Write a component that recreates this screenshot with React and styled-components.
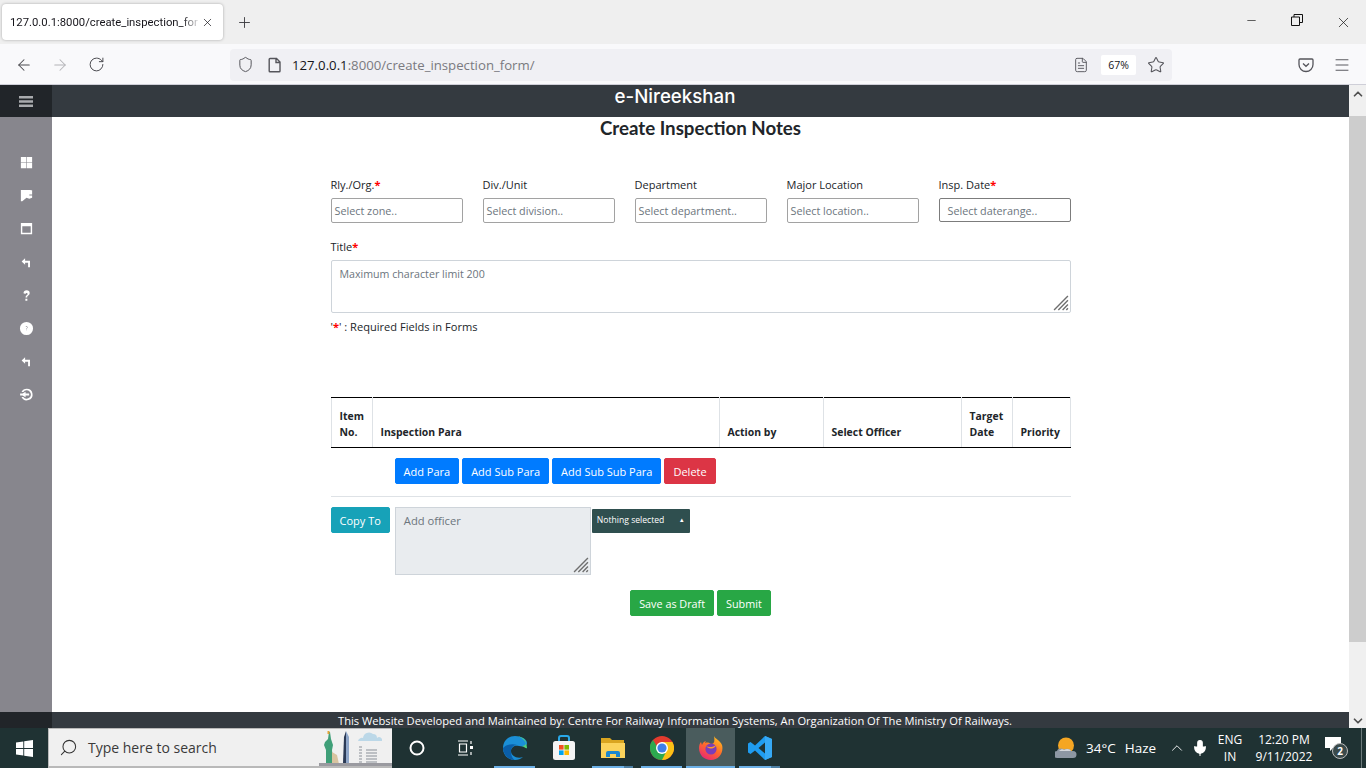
import React from "react";
import styled, { createGlobalStyle } from "styled-components";
import { ArrowLeft, ArrowRight, RotateCw, Shield, FileText, Star, Menu, X, Plus, Minus, Search, ChevronUp, ChevronDown, Mic } from "lucide-react";

const GlobalStyle = createGlobalStyle`
  html, body { margin: 0; padding: 0; height: 100%; overflow: hidden; }
  * { box-sizing: border-box; }
  body { font-family: "Open Sans", "Noto Sans", sans-serif; color: #212529; background: #fff; }
`;

const Screen = styled.div`
  width: 1366px;
  height: 768px;
  display: flex;
  flex-direction: column;
  overflow: hidden;
`;

/* browser chrome */
const TabStrip = styled.div`
  height: 44px;
  background: #efefef;
  display: flex;
  align-items: center;
  padding-left: 2px;
`;
const Tab = styled.div`
  width: 221px;
  height: 36px;
  background: #fff;
  border-radius: 4px;
  box-shadow: 0 0 3px rgba(0, 0, 0, 0.3);
  display: flex;
  align-items: center;
  padding: 0 9px 0 8px;
  font-family: "Roboto", sans-serif;
  font-size: 11.3px;
  color: #15141a;
`;
const TabTitle = styled.span`
  flex: 1;
  overflow: hidden;
  white-space: nowrap;
  -webkit-mask-image: linear-gradient(to right, #000 90%, transparent);
  mask-image: linear-gradient(to right, #000 90%, transparent);
`;
const NewTab = styled.div`
  width: 42px;
  display: flex;
  justify-content: center;
  color: #3b3b3f;
`;
const WindowButtons = styled.div`
  margin-left: auto;
  display: flex;
`;
const WindowButton = styled.div`
  width: 46px;
  display: flex;
  justify-content: center;
  color: #111;
`;
const Toolbar = styled.div`
  height: 41px;
  background: #f9f9fb;
  border-bottom: 1px solid #cfcfd8;
  display: flex;
  align-items: center;
  padding: 1px 0 0 6px;
`;
const NavButton = styled.div`
  width: 36px;
  display: flex;
  justify-content: center;
  color: ${(p) => (p.$off ? "#b4b4b8" : "#4a4a4f")};
`;
const UrlBar = styled.div`
  width: 942px;
  height: 32px;
  margin-left: 116px;
  background: #f0f0f4;
  border-radius: 4px;
  display: flex;
  align-items: center;
  padding-left: 7px;
  color: #55555b;
`;
const PageIcon = styled.svg`
  width: 16px;
  height: 16px;
  margin-left: 13px;
  fill: none;
  stroke: currentColor;
  stroke-width: 1.4;
`;
const UrlText = styled.div`
  margin-left: 9px;
  font-size: 13.2px;
  color: #7a7a80;
  flex: 1;
  b { font-weight: 400; color: #15141a; }
`;
const ZoomBadge = styled.div`
  width: 35px;
  height: 20px;
  margin: 0 11px 0 12px;
  background: #fff;
  border-radius: 2px;
  font-size: 10.5px;
  color: #15141a;
  display: flex;
  align-items: center;
  justify-content: center;
`;
const UrlEnd = styled.span`
  width: 7px;
`;
const ToolbarRight = styled.div`
  margin-left: 126px;
  display: flex;
  gap: 19px;
  align-items: center;
  color: #55555b;
`;

/* page */
const Page = styled.div`
  height: 643px;
  display: flex;
`;
const Sidebar = styled.aside`
  width: 52px;
  flex: none;
  background: #87868d;
  display: flex;
  flex-direction: column;
`;
const SideTop = styled.div`
  height: 32px;
  background: #212529;
  display: flex;
  align-items: center;
  justify-content: center;
`;
const SideList = styled.div`
  flex: 1;
  display: flex;
  flex-direction: column;
  align-items: center;
  padding-top: 38px;
  gap: 18.2px;
`;
const SideIcon = styled.svg`
  width: 15px;
  height: 15px;
  fill: #fff;
  display: block;
`;
const SideFoot = styled.div`
  height: 16px;
  background: #212529;
`;
const Main = styled.div`
  flex: 1;
  display: flex;
  flex-direction: column;
  min-width: 0;
`;
const TopBar = styled.header`
  height: 32px;
  background: #343a40;
  color: #fff;
  font-family: "Inter", sans-serif;
  font-weight: 500;
  font-size: 18.7px;
  line-height: 23px;
  text-align: center;
  padding-right: 51px;
`;
const Content = styled.main`
  flex: 1;
  display: flex;
  flex-direction: column;
  align-items: center;
  min-height: 0;
`;
const Heading = styled.h1`
  margin: 0;
  height: 23px;
  line-height: 23px;
  font-family: "Lato", sans-serif;
  font-weight: 700;
  font-size: 18.7px;
  color: #212529;
`;
const Form = styled.div`
  width: 740px;
  margin-top: 37px;
  font-size: 10.8px;
`;
const FieldRow = styled.div`
  display: grid;
  grid-template-columns: repeat(5, 132px);
  gap: 20px;
`;
const Label = styled.label`
  display: block;
  height: 16px;
  line-height: 16px;
  margin-bottom: 5px;
  font-size: 11px;
  color: #212529;
  i { color: #f00; font-style: normal; font-weight: 700; }
`;
const SelectBox = styled.div`
  height: ${(p) => (p.$date ? 24 : 25)}px;
  border: 1px solid ${(p) => (p.$date ? "#7c7c7c" : "#a2a2a2")};
  border-radius: 2px;
  padding-left: ${(p) => (p.$date ? 8 : 3)}px;
  line-height: 23px;
  color: #6c757d;
`;
const TitleGroup = styled.div`
  margin-top: 16px;
`;
const Area = styled.div`
  position: relative;
  border: 1px solid #ced4da;
  border-radius: ${(p) => (p.$flat ? 0 : 2)}px;
  background: ${(p) => (p.$flat ? "#e9ecef" : "#fff")};
  height: ${(p) => p.$h}px;
  width: ${(p) => p.$w || "auto"};
  padding: 5px 8px;
  line-height: 16px;
  font-size: ${(p) => (p.$flat ? 11.2 : 10.65)}px;
  color: #6c757d;
  flex: none;
`;
const Grip = styled.svg`
  position: absolute;
  right: 1px;
  bottom: 1px;
  width: 16px;
  height: 16px;
  stroke: #6f6f6f;
  stroke-width: 1.3;
  fill: none;
`;
const Note = styled.p`
  margin: 6px 0 0;
  line-height: 16px;
  font-size: 11.1px;
  i { color: #f00; font-style: normal; font-weight: 700; }
`;
const Table = styled.table`
  width: 739px;
  margin-top: 62px;
  border-collapse: collapse;
  table-layout: fixed;
  font-size: 10.45px;
  th {
    height: 50px;
    padding: 0 8px 7px;
    vertical-align: bottom;
    text-align: left;
    font-weight: 700;
    line-height: 16px;
    border-top: 1px solid #000;
    border-bottom: 1px solid #000;
    border-left: 1px solid #dee2e6;
    border-right: 1px solid #dee2e6;
  }
`;
const ParaActions = styled.div`
  display: flex;
  gap: 3px;
  padding: 10px 0 12px 64px;
  border-bottom: 1px solid #dee2e6;
`;
const Btn = styled.button`
  height: 26px;
  border: 1px solid ${(p) => p.$bg};
  border-radius: 2px;
  background: ${(p) => p.$bg};
  color: #fff;
  font: inherit;
  font-size: 11px;
  padding: 0 8px;
`;
const CopyRow = styled.div`
  display: flex;
  align-items: flex-start;
  gap: 5px;
  margin-top: 10px;
`;
const OfficerSelect = styled.div`
  width: 98px;
  height: 24px;
  margin: 2px 0 0 -4px;
  background: #2f4f4f;
  border-radius: 1px;
  color: #fff;
  font-size: 8.6px;
  line-height: 22px;
  padding-left: 5px;
  display: flex;
  justify-content: space-between;
  span:last-child { padding-right: 6px; font-size: 7px; }
`;
const FormActions = styled.div`
  display: flex;
  justify-content: center;
  gap: 3px;
  margin-top: 15px;
  button { font-size: 10.8px; }
`;
const Footer = styled.footer`
  height: 16px;
  background: #343a40;
  color: #fff;
  font-size: 11.15px;
  line-height: 18px;
  text-align: center;
  padding-right: 51px;
  white-space: nowrap;
`;
const Scrollbar = styled.div`
  width: 17px;
  flex: none;
  background: #f0f0f0;
  display: flex;
  flex-direction: column;
  color: #505050;
`;
const ScrollArrow = styled.div`
  height: ${(p) => (p.$down ? 17 : 31)}px;
  display: flex;
  justify-content: center;
  align-items: ${(p) => (p.$down ? "flex-end" : "flex-start")};
  padding: ${(p) => (p.$down ? "0" : "2px 0 0")};
`;
const ScrollThumb = styled.div`
  height: 526px;
  background: #cdcdcd;
`;
const ScrollGap = styled.div`
  flex: 1;
`;

/* taskbar */
const Taskbar = styled.div`
  height: 40px;
  background: #1f3233;
  display: flex;
  align-items: stretch;
  color: #fff;
  font-family: "Open Sans", sans-serif;
`;
const StartCell = styled.div`
  width: 48px;
  display: flex;
  align-items: center;
  justify-content: center;
`;
const SearchBox = styled.div`
  width: 344px;
  background: #f0f0f0;
  border: 1px solid #b9b9b9;
  border-bottom-width: 2px;
  border-right: 0;
  display: flex;
  align-items: center;
  padding-left: 10px;
  color: #333;
  font-size: 14px;
  position: relative;
  overflow: hidden;
`;
const SearchGlass = styled(Search)`
  transform: scaleX(-1);
`;
const SearchText = styled.span`
  margin-left: 10px;
  color: #3a3a3a;
`;
const SearchArt = styled.svg`
  position: absolute;
  right: 0;
  top: -1px;
  width: 76px;
  height: 40px;
`;
const AppCell = styled.div`
  width: 49px;
  position: relative;
  display: flex;
  align-items: center;
  justify-content: center;
  background: ${(p) => (p.$active ? "#4a5c5d" : "transparent")};
`;
const Running = styled.div`
  position: absolute;
  left: ${(p) => (p.$active ? 0 : 4)}px;
  right: ${(p) => (p.$active ? 0 : 4)}px;
  bottom: 0;
  height: 2px;
  background: ${(p) => (p.$stack ? "linear-gradient(to right, #6cb0e6 77%, #4d7fa3 77%)" : "#6cb0e6")};
`;
const Tray = styled.div`
  margin-left: auto;
  display: flex;
  align-items: center;
  padding-right: 16px;
  position: relative;
`;
const DesktopLine = styled.span`
  position: absolute;
  right: 4px;
  top: 0;
  bottom: 0;
  width: 1px;
  background: #6c7a7b;
`;
const Weather = styled.div`
  display: flex;
  align-items: center;
  font-size: 13.5px;
  width: 110px;
  span { margin-left: 9px; }
`;
const TrayIcon = styled.div`
  width: 24px;
  display: flex;
  justify-content: center;
  margin-right: ${(p) => p.$mr || 0}px;
`;
const Lang = styled.div`
  width: 36px;
  text-align: center;
  font-size: 12px;
  line-height: 17px;
`;
const Clock = styled.div`
  width: 64px;
  margin-left: 4px;
  text-align: center;
  font-size: 12px;
  line-height: 17px;
`;
const Notif = styled.div`
  width: 34px;
  display: flex;
  justify-content: center;
  position: relative;
  margin-top: -8px;
`;
const NotifBadge = styled.span`
  position: absolute;
  left: 16px;
  top: 7px;
  width: 16px;
  height: 16px;
  border: 1px solid #bbb;
  border-radius: 50%;
  background: #3a4a4b;
  font-size: 10px;
  font-weight: 700;
  line-height: 14px;
  text-align: center;
`;

const sideIcons = [
  <path key="a" d="M2 2h5.700v5.700H2zM8.300 2H14v5.700H8.300zM2 8.300h5.700V14H2zM8.300 8.300H14V14H8.300z" />,
  <path key="b" d="M2 2h9v5h3V2.500h-1.500V2H2zM2 2h9v6h3v2.500L11 11.500 8 10.500 3.500 14H2z" />,
  <path key="c" fillRule="evenodd" d="M2 2h12v12H2zM3.500 5.500v7h9v-7z" />,
  <path key="d" d="M6.500 3.500 2.800 7l3.700 3.500V8.200h3.200V13h2V6.200H6.500z" />,
  <path key="e" d="M4.800 5.600C4.800 3.600 6.200 2.400 8.200 2.400s3.200 1.200 3.200 2.900c0 1.500-.9 2.200-1.800 2.900-.6.400-.8.800-.8 1.400v.4H6.900V10c0-1 .4-1.600 1.200-2.200.7-.5 1.100-.9 1.100-1.500 0-.7-.4-1.100-1.100-1.100s-1.200.5-1.200 1.300zM6.800 11.500h2.100v2.100H6.800z" />,
  <path key="f" fillRule="evenodd" d="M8 1a7 7 0 1 0 0 14A7 7 0 0 0 8 1zM7.600 6.400c.5 0 .8-.3 1-.3.4 0 .4.700 0 1-.4.4-.8.600-.8 1.300v.3h.5v-.2c0-.4.700-.7 1-1.200.3-.7-.2-1.600-1.200-1.600-.5 0-.9.200-1 .4zM7.800 9.200h.6v.7h-.6z" />,
  <path key="g" d="M6.500 3.500 2.800 7l3.700 3.500V8.200h3.200V13h2V6.200H6.500z" />,
  <path key="h" d="M8.300 1.800a6.200 6.200 0 0 0-5.600 3.500h1.900a4.500 4.500 0 1 1 0 5.400H2.700a6.200 6.200 0 1 0 5.600-8.900zM7 5 3.800 7H1.200v2h2.600L7 11V9h3.800V7H7z" />,
];

const columnWidths = [41, 347, 104, 138, 51, 58];
const tableHeads = ["Item No.", "Inspection Para", "Action by", "Select Officer", "Target Date", "Priority"];

function Resize() {
  return (
    <Grip viewBox="0 0 15 15">
      <path d="M1 14 14 1M5 14 14 5M9 14l5-5M12.500 14l1.500-1.500" />
    </Grip>
  );
}

function WinLogo() {
  return (
    <svg width="17" height="17" viewBox="0 0 17 17" fill="#fff">
      <path d="M0 2.400 7.300 1.400v6.700H0zM8.200 1.300 17 0v8.100H8.200zM0 8.900h7.300v6.700L0 14.600zM8.200 8.900H17V17l-8.800-1.300z" />
    </svg>
  );
}

function City() {
  return (
    <SearchArt viewBox="0 0 76 40">
      <path d="M42 13a4 4 0 0 1 5-3 6 6 0 0 1 10-4 4 4 0 0 1 4 4 3 3 0 0 1 5 3z" fill="#bcd8e8" />
      <path d="M10 36V22l-2-5 1-3 3-3 1-7h1l1 7 2 6-1 5 1 14z" fill="#3f9f78" />
      <rect x="11.500" y="3" width="2" height="3" fill="#e2a43a" />
      <rect x="9" y="36" width="7" height="4" fill="#7a4a2e" />
      <path d="M16 24l5 3 2 9h-7z" fill="#d8c4a0" />
      <path d="M28 9 30 3V35h-3z" fill="#2b3a55" />
      <path d="M30 3l3 6v26h-3z" fill="#8fa6c8" />
      <path d="M3 35h73v3H3z" fill="#9a9aa0" />
      <path d="M0 40l3-2h73v2z" fill="#5fd0f0" />
      <path d="M43 19h3M43 22h3M43 25h3M43 28h3M43 31h3M43 34h3M50 22h11M50 25h11M50 28h11M50 31h11M50 34h11" stroke="#8a8f98" strokeWidth="1.100" />
    </SearchArt>
  );
}

const Edge = () => (
  <svg width="26" height="26" viewBox="0 0 26 26">
    <path d="M13 1C6 1 1 6 1 13c0 7 5 12 12 12 3 0 6-1 8-3-6 2-12-1-12-6 0-4 4-6 8-5 3 .7 8 1 8-3C25 4 19 1 13 1z" fill="#1b8fd6" />
    <path d="M25 13c0-6-5-12-12-12 6 0 11 3 11 7 0 2-2 3-4 3 3 1 4 3 5 2z" fill="#4fd07a" />
    <path d="M9 16c0-3 2-6 6-6-5-2-12 0-14 3 0 6 5 12 12 12-3-1-4-6-4-9z" fill="#0a5ea8" />
  </svg>
);
const Store = () => (
  <svg width="24" height="26" viewBox="0 0 24 26">
    <path d="M7 7V3a2 2 0 0 1 2-2h6a2 2 0 0 1 2 2v4" fill="none" stroke="#29a8e8" strokeWidth="2" />
    <rect x="1" y="6" width="22" height="19" rx="2.500" fill="#f4f4f4" />
    <rect x="7" y="10" width="4.600" height="4.600" fill="#f25022" />
    <rect x="12.400" y="10" width="4.600" height="4.600" fill="#7fba00" />
    <rect x="7" y="15.400" width="4.600" height="4.600" fill="#00a4ef" />
    <rect x="12.400" y="15.400" width="4.600" height="4.600" fill="#ffb900" />
  </svg>
);
const Explorer = () => (
  <svg width="24" height="24" viewBox="0 0 24 24">
    <path d="M0 2h9l2 2h12v18H0z" fill="#d9a520" />
    <path d="M0 7h24v15H0z" fill="#fbd35b" />
    <path d="M5 21v-4a2 2 0 0 1 2-2h10a2 2 0 0 1 2 2v4h-4v-3H9v3z" fill="#1b88d0" />
  </svg>
);
const Chrome = () => (
  <svg width="24" height="24" viewBox="0 0 24 24">
    <circle cx="12" cy="12" r="12" fill="#e33b2e" />
    <path d="M12 24a12 12 0 0 0 10.400-18H12l-4 11.500z" fill="#fbc116" />
    <path d="M12 24A12 12 0 0 1 3 4l5 8 8 4z" fill="#2da94f" />
    <circle cx="12" cy="12" r="6" fill="#fff" />
    <circle cx="12" cy="12" r="4.600" fill="#3f7fe8" />
  </svg>
);
const Firefox = () => (
  <svg width="24" height="24" viewBox="0 0 24 24">
    <defs>
      <linearGradient id="ff" x1="0.8" y1="0" x2="0.2" y2="1">
        <stop offset="0" stopColor="#ffc21f" />
        <stop offset="0.5" stopColor="#ff6a2a" />
        <stop offset="1" stopColor="#e8217a" />
      </linearGradient>
    </defs>
    <path d="M15 0c1 3 6 4 8 9 2 7-3 15-11 15C5 24 0 19 0 12c0-3 1-5 2-6l1 3c1-3 3-4 4-4-1 1-1 2-1 2 2-1 5 0 6 1 3 0 4-2 3-8z" fill="url(#ff)" />
    <circle cx="12" cy="13" r="5.600" fill="#7b3db8" />
    <path d="M7 10c3 2 8 1 10-1-1 4-6 5-10 1z" fill="#ff9a2a" />
  </svg>
);
const VsCode = () => (
  <svg width="24" height="24" viewBox="0 0 24 24">
    <path d="M17 0 24 3v18l-7 3-10-9.500L2.500 18 0 16.500V7.500L2.500 6 7 9.500zM17 6.500 10.500 12l6.500 5.500z" fill="#1f9cf0" />
    <path d="M17 0l7 3v18l-7 3z" fill="#36a9f5" />
  </svg>
);

function Sun() {
  return (
    <svg width="22" height="22" viewBox="0 0 22 22">
      <circle cx="11" cy="8.500" r="8" fill="#f5a623" />
      <path d="M2 21a3.500 3.500 0 0 1 0-7c1-3 5-3 7-1.500 2-1.500 6-1 7 1.500h2a3.500 3.500 0 0 1 0 7z" fill="#8d97a3" />
      <path d="M4 14c2-2 4-2 5-1 3-2 6-1 7 1z" fill="#d5d8dc" />
    </svg>
  );
}

function Pocket() {
  return (
    <svg width="16" height="16" viewBox="0 0 16 16" fill="none" stroke="currentColor" strokeWidth="1.300">
      <path d="M2 2h12a1 1 0 0 1 1 1v4.500a7 7 0 0 1-14 0V3a1 1 0 0 1 1-1z" />
      <path d="m5 6.500 3 2.800 3-2.800" />
    </svg>
  );
}

export default function App() {
  return (
    <Screen>
      <GlobalStyle />
      <TabStrip>
        <Tab>
          <TabTitle>127.0.0.1:8000/create_inspection_for</TabTitle>
          <X size={13} strokeWidth={1.3} />
        </Tab>
        <NewTab><Plus size={17} strokeWidth={1.3} /></NewTab>
        <WindowButtons>
          <WindowButton><Minus size={13} strokeWidth={1.2} /></WindowButton>
          <WindowButton>
            <svg width="12" height="12" viewBox="0 0 12 12" fill="none" stroke="currentColor">
              <path d="M.5 3h8v8.500h-8zM3 3V.5h8.500v8H8.500" />
            </svg>
          </WindowButton>
          <WindowButton><X size={17} strokeWidth={1} /></WindowButton>
        </WindowButtons>
      </TabStrip>
      <Toolbar>
        <NavButton><ArrowLeft size={18} strokeWidth={1.4} /></NavButton>
        <NavButton $off><ArrowRight size={18} strokeWidth={1.4} /></NavButton>
        <NavButton><RotateCw size={17} strokeWidth={1.4} /></NavButton>
        <UrlBar>
          <Shield size={17} strokeWidth={1.4} />
          <PageIcon viewBox="0 0 16 16">
            <path d="M3 1.500h6.500l3.500 3.500v9a.8.8 0 0 1-.8.8H3a.8.8 0 0 1-.8-.8V2.300a.8.8 0 0 1 .8-.8zM9 1.500v4h4" />
          </PageIcon>
          <UrlText><b>127.0.0.1</b>:8000/create_inspection_form/</UrlText>
          <FileText size={16} strokeWidth={1.4} />
          <ZoomBadge>67%</ZoomBadge>
          <Star size={18} strokeWidth={1.4} />
          <UrlEnd />
        </UrlBar>
        <ToolbarRight>
          <Pocket />
          <Menu size={18} strokeWidth={1.3} />
        </ToolbarRight>
      </Toolbar>

      <Page>
        <Sidebar>
          <SideTop>
            <svg width="14" height="13" viewBox="0 0 14 13" fill="#a9abae">
              <path d="M0 1h14v2.600H0zM0 5.200h14v2.600H0zM0 9.400h14V12H0z" />
            </svg>
          </SideTop>
          <SideList>
            {sideIcons.map((icon, i) => (
              <SideIcon key={i} viewBox="0 0 16 16">{icon}</SideIcon>
            ))}
          </SideList>
          <SideFoot />
        </Sidebar>
        <Main>
          <TopBar>e-Nireekshan</TopBar>
          <Content>
            <Heading>Create Inspection Notes</Heading>
            <Form>
              <FieldRow>
                <div><Label>Rly./Org.<i>*</i></Label><SelectBox>Select zone..</SelectBox></div>
                <div><Label>Div./Unit</Label><SelectBox>Select division..</SelectBox></div>
                <div><Label>Department</Label><SelectBox>Select department..</SelectBox></div>
                <div><Label>Major Location</Label><SelectBox>Select location..</SelectBox></div>
                <div><Label>Insp. Date<i>*</i></Label><SelectBox $date>Select daterange..</SelectBox></div>
              </FieldRow>
              <TitleGroup>
                <Label>Title<i>*</i></Label>
                <Area $h={53}>Maximum character limit 200<Resize /></Area>
              </TitleGroup>
              <Note>'<i>*</i>' : Required Fields in Forms</Note>
              <Table>
                <colgroup>
                  {columnWidths.map((w, i) => <col key={i} style={{ width: w }} />)}
                </colgroup>
                <thead>
                  <tr>{tableHeads.map((h) => <th key={h}>{h}</th>)}</tr>
                </thead>
              </Table>
              <ParaActions>
                <Btn $bg="#007bff">Add Para</Btn>
                <Btn $bg="#007bff">Add Sub Para</Btn>
                <Btn $bg="#007bff">Add Sub Sub Para</Btn>
                <Btn $bg="#dc3545">Delete</Btn>
              </ParaActions>
              <CopyRow>
                <Btn $bg="#17a2b8">Copy To</Btn>
                <Area $flat $h={68} $w="196px">Add officer<Resize /></Area>
                <OfficerSelect><span>Nothing selected</span><span>▴</span></OfficerSelect>
              </CopyRow>
              <FormActions>
                <Btn $bg="#28a745">Save as Draft</Btn>
                <Btn $bg="#28a745">Submit</Btn>
              </FormActions>
            </Form>
          </Content>
          <Footer>This Website Developed and Maintained by: Centre For Railway Information Systems, An Organization Of The Ministry Of Railways.</Footer>
        </Main>
        <Scrollbar>
          <ScrollArrow><ChevronUp size={14} strokeWidth={3} /></ScrollArrow>
          <ScrollThumb />
          <ScrollGap />
          <ScrollArrow $down><ChevronDown size={14} strokeWidth={3} /></ScrollArrow>
        </Scrollbar>
      </Page>

      <Taskbar>
        <StartCell><WinLogo /></StartCell>
        <SearchBox>
          <SearchGlass size={19} strokeWidth={1.3} />
          <SearchText>Type here to search</SearchText>
          <City />
        </SearchBox>
        <AppCell>
          <svg width="16" height="16" viewBox="0 0 16 16" fill="none" stroke="#fff" strokeWidth="2"><circle cx="8" cy="8" r="6.500" /></svg>
        </AppCell>
        <AppCell>
          <svg width="18" height="16" viewBox="0 0 18 16" fill="none" stroke="#fff" strokeWidth="1.200">
            <path d="M1 1h10M1 15h10M2.500 4h7v8h-7zM14 1v3M14 12v3" />
            <rect x="13" y="6" width="3" height="3" fill="#fff" stroke="none" />
          </svg>
        </AppCell>
        <AppCell><Edge /><Running /></AppCell>
        <AppCell><Store /></AppCell>
        <AppCell><Explorer /><Running $stack /></AppCell>
        <AppCell><Chrome /><Running /></AppCell>
        <AppCell $active><Firefox /><Running $active /></AppCell>
        <AppCell><VsCode /><Running $stack /></AppCell>
        <Tray>
          <Weather><Sun /><span>34°C</span><span>Haze</span></Weather>
          <TrayIcon $mr={-1}><ChevronUp size={18} strokeWidth={1.2} /></TrayIcon>
          <TrayIcon><Mic size={18} strokeWidth={1.5} fill="#fff" /></TrayIcon>
          <Lang>ENG<br />IN</Lang>
          <Clock>12:20 PM<br />9/11/2022</Clock>
          <Notif>
            <svg width="16" height="16" viewBox="0 0 16 16" fill="#fff"><path d="M0 1h16v11H8l-3 3v-3H0z" /></svg>
            <NotifBadge>2</NotifBadge>
          </Notif>
          <DesktopLine />
        </Tray>
      </Taskbar>
    </Screen>
  );
}
